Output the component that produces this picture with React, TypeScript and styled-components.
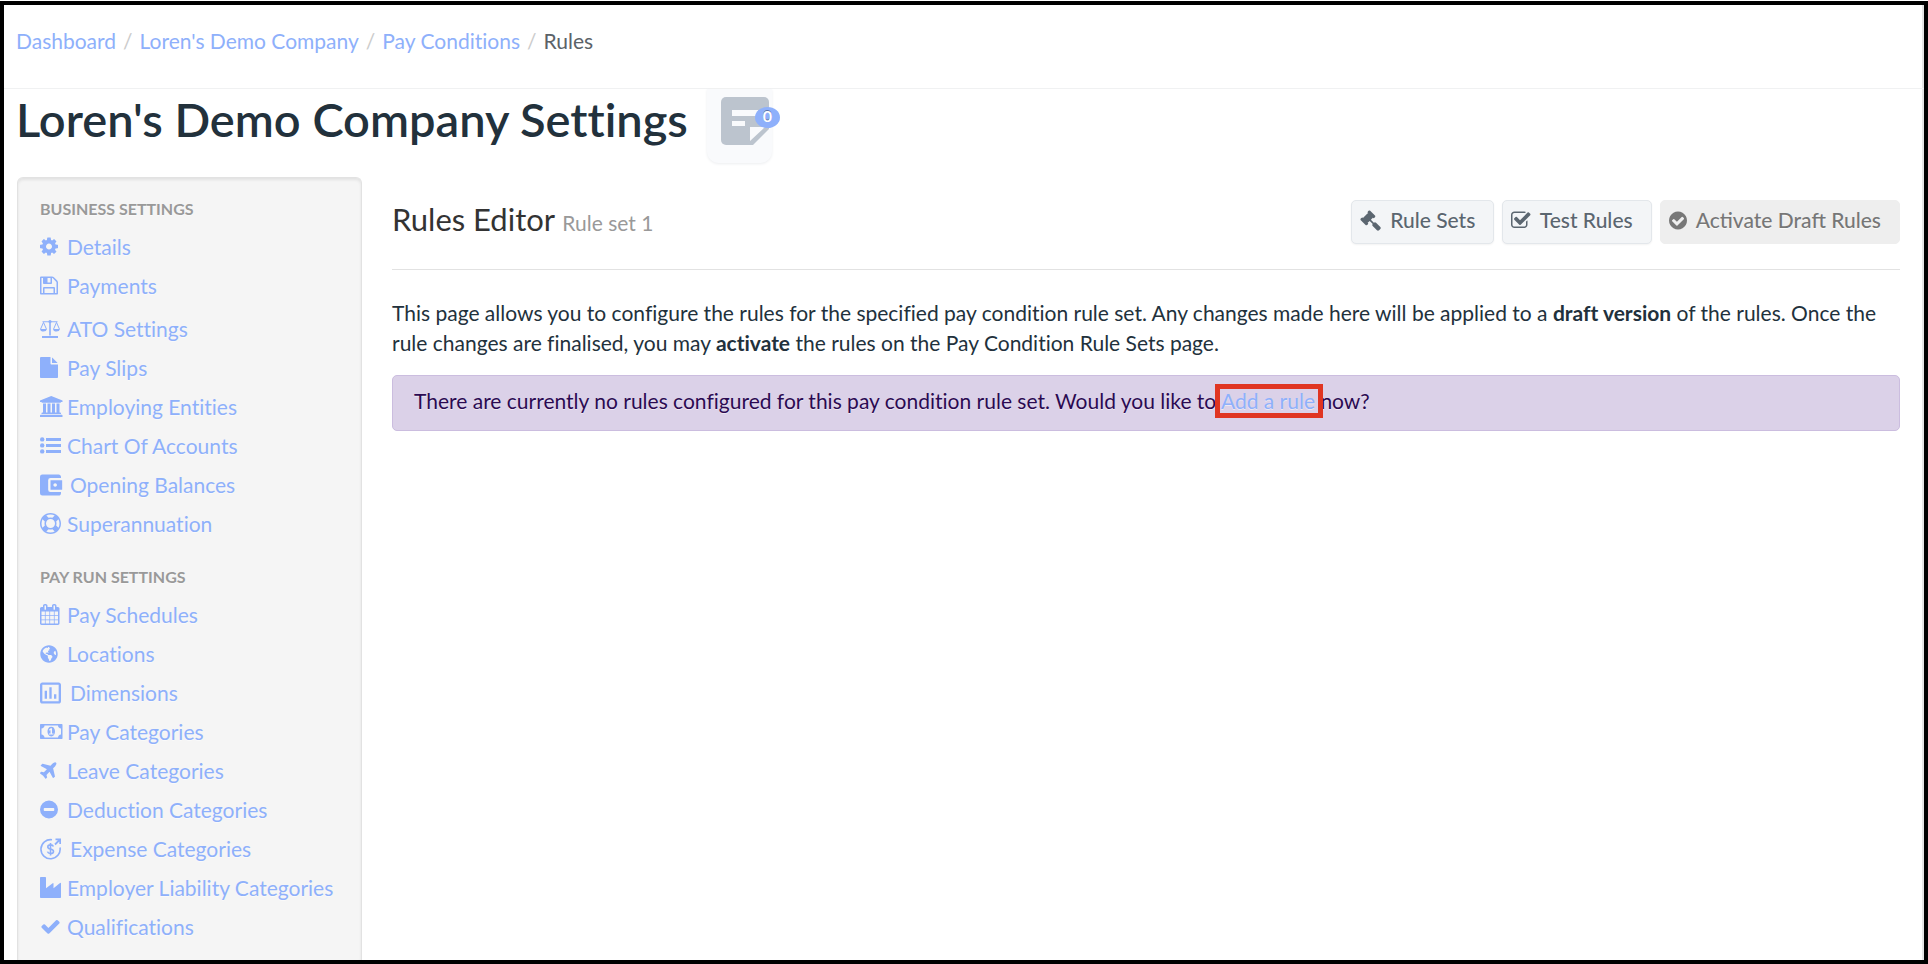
import React from "react";
import styled, { createGlobalStyle } from "styled-components";
import { MdAccountBalanceWallet, MdOutlineInsertChartOutlined } from "react-icons/md";
import { FaGlobeAmericas } from "react-icons/fa";

const LINK = "#8eb0fb";

const GlobalStyle = createGlobalStyle`
  * { box-sizing: border-box; }
  body {
    margin: 0;
    background: #fff;
    color: #22313c;
    font-family: Lato, "Open Sans", sans-serif;
    font-size: 21px;
    line-height: 30px;
    font-variant-ligatures: none;
  }
  svg { display: block; }
`;

const Frame = styled.div`
  height: 100vh;
  padding-top: 1px;
  overflow: hidden;
`;

const Page = styled.div`
  height: 100%;
  display: flex;
  flex-direction: column;
  border: 4px solid #000;
  box-shadow: inset -2px 0 0 #e4e4e4;
  overflow: hidden;
`;

const TopBar = styled.nav`
  flex: none;
  height: 84px;
  padding: 21px 12px 0;
  border-bottom: 1px solid #f0f1f2;
`;

const Crumbs = styled.ol`
  display: flex;
  margin: 0;
  padding: 0;
  list-style: none;
  color: #5b6268;
`;

const Crumb = styled.li`
  & + &::before {
    content: "/";
    padding: 0 7px;
    color: #ccc;
  }
`;

const Anchor = styled.a`
  color: ${LINK};
  text-decoration: none;
`;

const Heading = styled.header`
  flex: none;
  display: flex;
  gap: 19px;
  height: 88px;
  padding-left: 12px;
`;

const Title = styled.h1`
  margin: 0;
  font-size: 47px;
  line-height: 60px;
  font-weight: 600;
`;

const NotesButton = styled.button`
  position: relative;
  display: flex;
  align-items: flex-start;
  width: 65px;
  height: 74px;
  padding: 8px 0 0 14px;
  border: 0;
  border-radius: 0 0 12px 12px;
  background: #f9fafc;
  box-shadow: 0 1px 3px #eceef0;
`;

const Badge = styled.span`
  position: absolute;
  top: 18px;
  left: 48px;
  width: 25px;
  height: 21px;
  border-radius: 50%;
  background: ${LINK};
  color: #fff;
  font: 700 16px/18px Lato, sans-serif;
  text-align: center;
  text-shadow: 0 -1px 0 rgba(0, 0, 0, 0.35);
`;

const Columns = styled.div`
  flex: 1;
  min-height: 0;
  display: grid;
  grid-template-columns: 345px minmax(0, 1fr);
  gap: 30px;
  padding: 0 24px 0 13px;
`;

const Sidebar = styled.aside`
  padding: 12px 22px 0;
  border: 1px solid #e2e2e2;
  border-bottom: 0;
  border-radius: 6px 6px 0 0;
  background: #f5f5f5;
  box-shadow: inset 0 2px 3px rgba(0, 0, 0, 0.08);
  text-shadow: 0 1px 0 rgba(255, 255, 255, 0.5);
  overflow: hidden;
`;

const GroupTitle = styled.h2`
  margin: 0;
  font-size: 16px;
  line-height: 37px;
  font-weight: 700;
  color: #999;
  text-transform: uppercase;
`;

const Links = styled.ul`
  margin: 0 0 15px;
  padding: 0;
  list-style: none;
`;

const Item = styled.li<{ $tall?: boolean }>`
  padding-top: ${(p) => (p.$tall ? 4 : 0)}px;
`;

const ItemLink = styled(Anchor)`
  display: flex;
  align-items: center;
  height: 39px;
  white-space: nowrap;
`;

const Slot = styled.span<{ $wide?: boolean }>`
  flex: none;
  width: ${(p) => (p.$wide ? 30 : 27)}px;
`;

const Main = styled.main`
  padding-top: 23px;
`;

const EditorHeader = styled.div`
  display: flex;
  justify-content: space-between;
  height: 70px;
  border-bottom: 1px solid #e2e2e2;
`;

const EditorTitle = styled.h2`
  margin: 0;
  font-size: 31px;
  line-height: 38px;
  font-weight: 400;
  color: #333;
`;

const Muted = styled.small`
  font-size: 21px;
  color: #999;
`;

const Actions = styled.div`
  display: flex;
  gap: 8px;
`;

const ActionButton = styled.button`
  display: flex;
  align-items: center;
  gap: 9px;
  height: 44px;
  padding: 0 18px 4px 8px;
  border: 1px solid #e3e7eb;
  border-radius: 5px;
  background: #f3f5f7;
  box-shadow: 0 1px 2px rgba(0, 0, 0, 0.05);
  color: #5b6670;
  font: 500 21px/30px Lato, sans-serif;
  text-shadow: 0 1px 1px rgba(255, 255, 255, 0.75);

  &:disabled {
    border-color: #eee;
    background: #eee;
    box-shadow: none;
    color: #777;
  }
`;

const Intro = styled.p`
  margin: 28px 0 0;

  strong { font-weight: 700; }
`;

const Notice = styled.div`
  margin-top: 17px;
  height: 56px;
  padding: 10px 21px;
  border: 1px solid #cbbddf;
  border-radius: 5px;
  background: #dbd1e8;
  color: #2b0a52;
  text-shadow: 0 1px 0 rgba(255, 255, 255, 0.5);
`;

const AddLink = styled(Anchor)`
  position: relative;

  &::after {
    content: "";
    position: absolute;
    inset: -4px -8px -5px -6px;
    border: 5px solid #e03522;
  }
`;

type GlyphProps = { d: string; w?: number; x?: number; size?: number };

const Glyph = ({ d, w = 1792, x = 0, size = 21 }: GlyphProps) => (
  <svg width={(size * w) / 1792} height={size} viewBox={`${x} 0 ${w} 1792`} fill="currentColor" aria-hidden="true">
    <path d={d} />
  </svg>
);

const COG = "M1024 896q0-106-75-181t-181-75-181 75-75 181 75 181 181 75 181-75 75-181zm512-109v222q0 12-8 23t-20 13l-185 28q-19 54-39 91 35 50 107 138 10 12 10 25t-9 23q-27 37-99 108t-94 71q-12 0-26-9l-138-108q-44 23-91 38-16 136-29 186-7 28-36 28h-222q-14 0-24.5-8.5t-11.5-21.5l-28-184q-49-16-90-37l-141 107q-10 9-25 9-14 0-25-11-126-114-165-168-7-10-7-23 0-12 8-23 15-21 51-66.5t54-70.5q-27-50-41-99l-183-27q-13-2-21-12.5t-8-23.5v-222q0-12 8-23t19-13l186-28q14-46 39-92-40-57-107-138-10-12-10-24 0-10 9-23 26-36 98.5-107.5t94.5-71.5q13 0 26 10l138 107q44-23 91-38 16-136 29-186 7-28 36-28h222q14 0 24.5 8.5t11.5 21.5l28 184q49 16 90 37l142-107q9-9 24-9 13 0 25 10 129 119 165 170 7 8 7 22 0 12-8 23-15 21-51 66.5t-54 70.5q26 50 41 98l183 28q13 2 21 12.5t8 23.5z";
const SAVE = "M512 1536h768v-384h-768v384zm896 0h128v-896q0-14-10-38.5t-20-34.5l-281-281q-10-10-34-20t-39-10v416q0 40-28 68t-68 28h-576q-40 0-68-28t-28-68v-416h-128v1280h128v-416q0-40 28-68t68-28h832q40 0 68 28t28 68v416zm-384-928v-320q0-13-9.5-22.5t-22.5-9.5h-192q-13 0-22.5 9.5t-9.5 22.5v320q0 13 9.5 22.5t22.5 9.5h192q13 0 22.5-9.5t9.5-22.5zm640 32v928q0 40-28 68t-68 28h-1344q-40 0-68-28t-28-68v-1344q0-40 28-68t68-28h928q40 0 88 20t76 48l280 280q28 28 48 76t20 88z";
const FILE = "M1152 512v-472q22 14 36 28l408 408q14 14 28 36h-472zm-128 32q0 40 28 68t68 28h544v1056q0 40-28 68t-68 28h-1344q-40 0-68-28t-28-68v-1600q0-40 28-68t68-28h800v544z";
const BANK = "M832 0l960 384v128h-128q0 26-20.5 45t-48.5 19h-1526q-28 0-48.5-19t-20.5-45h-128v-128zm-704 640h256v768h128v-768h256v768h128v-768h256v768h128v-768h256v768h59q28 0 48.5 19t20.5 45v64h-1664v-64q0-26 20.5-45t48.5-19h59v-768zm1595 960q28 0 48.5 19t20.5 45v128h-1920v-128q0-26 20.5-45t48.5-19h1782z";
const RING = "M896 0q182 0 348 71t286 191 191 286 71 348-71 348-191 286-286 191-348 71-348-71-286-191-191-286-71-348 71-348 191-286 286-191 348-71zm0 128q-190 0-361 90l194 194q82-28 167-28t167 28l194-194q-171-90-361-90zm-678 1129l194-194q-28-82-28-167t28-167l-194-194q-90 171-90 361t90 361zm678 407q190 0 361-90l-194-194q-82 28-167 28t-167-28l-194 194q171 90 361 90zm0-384q159 0 271.5-112.5t112.5-271.5-112.5-271.5-271.5-112.5-271.5 112.5-112.5 271.5 112.5 271.5 271.5 112.5zm484-217l194 194q90-171 90-361t-90-361l-194 194q28 82 28 167t-28 167z";
const CALENDAR = "M192 1664h288v-288h-288v288zm352 0h320v-288h-320v288zm-352-352h288v-320h-288v320zm352 0h320v-320h-320v320zm-352-384h288v-288h-288v288zm736 736h320v-288h-320v288zm-384-736h320v-288h-320v288zm768 736h288v-288h-288v288zm-384-352h320v-320h-320v320zm-352-864v-288q0-13-9.5-22.5t-22.5-9.5h-64q-13 0-22.5 9.5t-9.5 22.5v288q0 13 9.5 22.5t22.5 9.5h64q13 0 22.5-9.5t9.5-22.5zm736 864h288v-320h-288v320zm-384-384h320v-288h-320v288zm384 0h288v-288h-288v288zm32-480v-288q0-13-9.5-22.5t-22.5-9.5h-64q-13 0-22.5 9.5t-9.5 22.5v288q0 13 9.5 22.5t22.5 9.5h64q13 0 22.5-9.5t9.5-22.5zm384-64v1280q0 52-38 90t-90 38h-1408q-52 0-90-38t-38-90v-1280q0-52 38-90t90-38h128v-96q0-66 47-113t113-47h64q66 0 113 47t47 113v96h384v-96q0-66 47-113t113-47h64q66 0 113 47t47 113v96h128q52 0 90 38t38 90z";
const MONEY = "M768 1152h384v-96h-128v-448h-114l-148 137 77 80q42-37 55-57h2v288h-128v96zm512-256q0 70-21 142t-59.5 134-101.5 101-138 39-138-39-101.5-101-59.5-134-21-142 21-142 59.5-134 101.5-101 138-39 138 39 101.5 101 59.5 134 21 142zm512 256v-512q-106 0-181-75t-75-181h-1152q0 106-75 181t-181 75v512q106 0 181 75t75 181h1152q0-106 75-181t181-75zm128-832v1152q0 26-19 45t-45 19h-1792q-26 0-45-19t-19-45v-1152q0-26 19-45t45-19h1792q26 0 45 19t19 45z";
const PLANE = "M1568 224q44 52 12 148t-108 172l-161 161 160 696q5 19-12 33l-128 96q-7 6-19 6-4 0-7-1-15-3-21-16l-279-508-259 259 53 194q5 17-8 31l-96 96q-9 9-23 9h-2q-15-2-24-13l-189-252-252-189q-11-7-13-23-1-13 9-25l96-97q9-9 23-9 6 0 8 1l194 53 259-259-508-279q-14-8-17-24-2-16 9-27l128-128q14-13 30-8l665 159 160-160q76-76 172-108t148 12z";
const MINUS = "M896 128a768 768 0 1 0 0 1536a768 768 0 1 0 0-1536zm-384 640h768q64 0 64 64v128q0 64-64 64h-768q-64 0-64-64v-128q0-64 64-64z";
const INDUSTRY = "M64 0h384q64 0 64 64v894l569-430q71-40 71 40v390l530-430q110-70 110 40v1160q0 64-64 64h-1664q-64 0-64-64v-1664q0-64 64-64z";
const CHECK = "M1671 566q0 40-28 68l-724 724-136 136q-28 28-68 28t-68-28l-136-136-362-362q-28-28-28-68t28-68l136-136q28-28 68-28t68 28l294 295 656-657q28-28 68-28t68 28l136 136q28 28 28 68z";
const CHECK_CIRCLE = "M1412 734q0-28-18-46l-91-90q-19-19-45-19t-45 19l-408 407-226-226q-19-19-45-19t-45 19l-91 90q-18 18-18 46 0 27 18 45l362 362q19 19 45 19 27 0 46-19l543-543q18-18 18-45zm252 162q0 209-103 385.5t-279.5 279.5-385.5 103-385.5-103-279.5-279.5-103-385.5 103-385.5 279.5-279.5 385.5-103 385.5 103 279.5 279.5 103 385.5z";
const CHECK_SQUARE = "M1472 930v318q0 119-84.5 203.5t-203.5 84.5h-832q-119 0-203.5-84.5t-84.5-203.5v-832q0-119 84.5-203.5t203.5-84.5h832q63 0 117 25 15 7 18 23 3 17-9 29l-49 49q-10 10-23 10-3 0-9-2-23-6-45-6h-832q-66 0-113 47t-47 113v832q0 66 47 113t113 47h832q66 0 113-47t47-113v-254q0-13 9-22l64-64q10-10 23-10 6 0 12 3 20 8 20 29zm231-489l-814 814q-24 24-57 24t-57-24l-430-430q-24-24-24-57t24-57l110-110q24-24 57-24t57 24l263 263 647-647q24-24 57-24t57 24l110 110q24 24 24 57t-24 57z";
const GAVEL = "M1771 1536q0 53-37 90l-107 108q-39 37-91 37-53 0-90-37l-363-364q-38-36-38-90 0-53 43-96l-256-256-126 126q-14 14-34 14t-34-14q2 2 12.5 12t12.5 13 10 11.5 10 13.5 6 13.5 5.5 16.5 1.5 18q0 38-28 68-3 3-16.5 18t-19 20.5-18.5 16.5-22 15.5-22 9-26 4.5q-40 0-68-28l-408-408q-28-28-28-68 0-13 4.5-26t9-22 15.5-22 16.5-18.5 20.5-19 18-16.5q30-28 68-28 10 0 18 1.5t16.5 5.5 13.5 6 13.5 10 11.5 10 13 12.5 12 12.5q-14-14-14-34t14-34l348-348q14-14 34-14t34 14q-2-2-12.5-12t-12.5-13-10-11.5-10-13.5-6-13.5-5.5-16.5-1.5-18q0-38 28-68 3-3 16.5-18t19-20.5 18.5-16.5 22-15.5 22-9 26-4.5q40 0 68 28l408 408q28 28 28 68 0 13-4.5 26t-9 22-15.5 22-16.5 18.5-20.5 19-18 16.5q-30 28-68 28-10 0-18-1.5t-16.5-5.5-13.5-6-13.5-10-11.5-10-13-12.5-12-12.5q14 14 14 34t-14 34l-126 126 256 256q43-43 96-43 52 0 91 37l363 363q37 39 37 91z";

const ScaleIcon = () => (
  <svg width="20" height="18" viewBox="0 0 20 18" fill="currentColor" aria-hidden="true">
    <path d="M9.200 1.500h1.600V15.500H9.200zM2.500 1.200h15v1h-15zM2 16h16v2H2zM0 9h7q-.6 2.600-3.500 2.600T0 9zM13 9h7q-.6 2.600-3.500 2.600T13 9z" />
    <circle cx="10" cy="1.600" r="1.600" />
    <path d="M.6 9 3.500 2.400 6.400 9M13.600 9l2.900-6.600L19.400 9" fill="none" stroke="currentColor" />
  </svg>
);

const ListIcon = () => (
  <svg width="21" height="17" viewBox="0 0 21 17" fill="currentColor" aria-hidden="true">
    <circle cx="2.200" cy="2.400" r="2.200" />
    <circle cx="2.200" cy="8.400" r="2.200" />
    <circle cx="2.200" cy="14.400" r="2.200" />
    <path d="M6 1h15v3H6zM6 7h15v3H6zM6 13h15v3H6z" />
  </svg>
);

const ExpenseIcon = () => (
  <svg width="21" height="22" viewBox="0 0 21 22" fill="none" stroke="currentColor" strokeWidth="1.600" aria-hidden="true">
    <path d="M12 1.700A9.600 9.600 0 1 0 20 9.500" />
    <path d="M15 6.500 19.500 2M15.500 1.300h4.700V6" strokeWidth="1.800" />
    <path d="M13.400 8.600q-.6-1.700-2.900-1.700-2.700 0-2.700 2 0 1.500 2.700 2.100 3 .6 3 2.400 0 2.100-3 2.100-2.500 0-3-1.900M10.500 5v12.400" />
  </svg>
);

const NoteIcon = () => (
  <svg width="48" height="48" viewBox="0 0 48 48" aria-hidden="true">
    <path d="M5 0h38a5 5 0 0 1 5 5v27L32 48H5a5 5 0 0 1-5-5V5a5 5 0 0 1 5-5z" fill="#bcc4ce" />
    <path d="M11 13h26v6H11zM11 24h13v5H11zM29 30h15L29 44z" fill="#f9fafc" />
  </svg>
);

type Entry = { label: string; icon: React.ReactNode; wide?: boolean; tall?: boolean };

const groups: { title: string; items: Entry[] }[] = [
  {
    title: "Business Settings",
    items: [
      { label: "Details", icon: <Glyph d={COG} w={1536} /> },
      { label: "Payments", icon: <Glyph d={SAVE} w={1536} x={128} /> },
      { label: "ATO Settings", icon: <ScaleIcon />, tall: true },
      { label: "Pay Slips", icon: <Glyph d={FILE} w={1536} x={128} /> },
      { label: "Employing Entities", icon: <Glyph d={BANK} w={1920} x={-128} /> },
      { label: "Chart Of Accounts", icon: <ListIcon /> },
      { label: "Opening Balances", icon: <MdAccountBalanceWallet size={28} viewBox="3 0 24 24" />, wide: true },
      { label: "Superannuation", icon: <Glyph d={RING} /> },
    ],
  },
  {
    title: "Pay Run Settings",
    items: [
      { label: "Pay Schedules", icon: <Glyph d={CALENDAR} w={1664} x={64} /> },
      { label: "Locations", icon: <FaGlobeAmericas size={18} /> },
      { label: "Dimensions", icon: <MdOutlineInsertChartOutlined size={28} viewBox="3 0 24 24" />, wide: true },
      { label: "Pay Categories", icon: <Glyph d={MONEY} w={1920} /> },
      { label: "Leave Categories", icon: <Glyph d={PLANE} w={1536} x={192} /> },
      { label: "Deduction Categories", icon: <Glyph d={MINUS} w={1536} x={128} /> },
      { label: "Expense Categories", icon: <ExpenseIcon />, wide: true },
      { label: "Employer Liability Categories", icon: <Glyph d={INDUSTRY} /> },
      { label: "Qualifications", icon: <Glyph d={CHECK} /> },
    ],
  },
];

export default function App() {
  return (
    <Frame>
      <GlobalStyle />
      <Page>
        <TopBar aria-label="Breadcrumb">
          <Crumbs>
            <Crumb><Anchor href="#dashboard">Dashboard</Anchor></Crumb>
            <Crumb><Anchor href="#company">Loren's Demo Company</Anchor></Crumb>
            <Crumb><Anchor href="#conditions">Pay Conditions</Anchor></Crumb>
            <Crumb aria-current="page">Rules</Crumb>
          </Crumbs>
        </TopBar>
        <Heading>
          <Title>Loren's Demo Company Settings</Title>
          <NotesButton type="button" aria-label="Notes">
            <NoteIcon />
            <Badge>0</Badge>
          </NotesButton>
        </Heading>
        <Columns>
          <Sidebar>
            {groups.map((group) => (
              <nav key={group.title} aria-label={group.title}>
                <GroupTitle>{group.title}</GroupTitle>
                <Links>
                  {group.items.map((item) => (
                    <Item key={item.label} $tall={item.tall}>
                      <ItemLink href="#settings">
                        <Slot $wide={item.wide}>{item.icon}</Slot>
                        {item.label}
                      </ItemLink>
                    </Item>
                  ))}
                </Links>
              </nav>
            ))}
          </Sidebar>
          <Main>
            <EditorHeader>
              <EditorTitle>
                Rules Editor <Muted>Rule set 1</Muted>
              </EditorTitle>
              <Actions>
                <ActionButton type="button"><Glyph d={GAVEL} />Rule Sets</ActionButton>
                <ActionButton type="button"><Glyph d={CHECK_SQUARE} w={1664} x={64} />Test Rules</ActionButton>
                <ActionButton type="button" disabled><Glyph d={CHECK_CIRCLE} w={1536} x={128} />Activate Draft Rules</ActionButton>
              </Actions>
            </EditorHeader>
            <Intro>
              This page allows you to configure the rules for the specified pay condition rule set. Any changes made
              here will be applied to a <strong>draft version</strong> of the rules. Once the rule changes are
              finalised, you may <strong>activate</strong> the rules on the Pay Condition Rule Sets page.
            </Intro>
            <Notice>
              There are currently no rules configured for this pay condition rule set. Would you like to{" "}
              <AddLink href="#add-rule">Add a rule</AddLink> now?
            </Notice>
          </Main>
        </Columns>
      </Page>
    </Frame>
  );
}
